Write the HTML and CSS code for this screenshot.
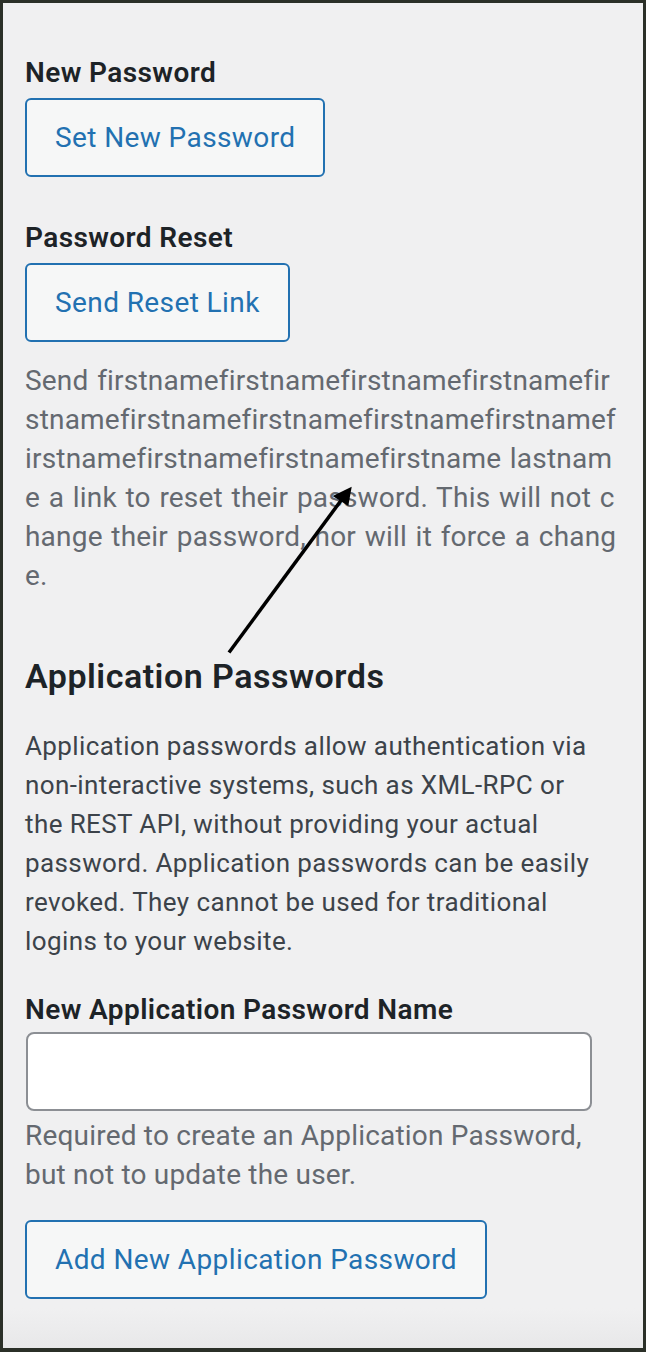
FILE: index.html
```html
<!DOCTYPE html>
<html lang="en">

<head>
    <meta charset="UTF-8">
    <meta name="viewport" content="width=device-width, initial-scale=1.0">
    <title>Profile - Account Management</title>
    <link rel="stylesheet" href="styles.css">
</head>

<body>

    <div class="screen">
        <div class="field">
            <div class="field-label">New Password</div>
            <button type="button" class="button">Set New Password</button>
        </div>

        <div class="field">
            <div class="field-label">Password Reset</div>
            <button type="button" class="button">Send Reset Link</button>
            <p class="description reset-note">Send firstnamefirstnamefirstnamefirstnamefirstnamefirstnamefirstnamefirstnamefirstnamefirstnamefirstnamefirstnamefirstname lastname a link to reset their password. This will not change their password, nor will it force a change.</p>
        </div>

        <h2>Application Passwords</h2>
        <p class="intro">Application passwords allow authentication via non-interactive systems, such as XML-RPC or the REST API, without providing your actual password. Application passwords can be easily revoked. They cannot be used for traditional logins to your website.</p>

        <div class="field">
            <label class="field-label" for="new_application_password_name">New Application Password Name</label>
            <input type="text" id="new_application_password_name" class="input">
            <p class="description">Required to create an Application Password, but not to update the user.</p>
            <button type="button" class="button add-button">Add New Application Password</button>
        </div>

        <!-- annotation arrow drawn over the page -->
        <svg class="arrow" width="646" height="1352" viewBox="0 0 646 1352">
            <line x1="229" y1="652.5" x2="341" y2="500.5" stroke="#000" stroke-width="3.5" />
            <polygon points="351.7,486.7 332.7,496 348.3,506" fill="#000" />
        </svg>
    </div>

</body>

</html>
```

FILE: styles.css
```css
body {
    margin: 0;
    padding: 0;
    background-color: #2b3028;
    font-family: Roboto, "Liberation Sans", sans-serif;
}

.screen {
    position: relative;
    box-sizing: border-box;
    width: 646px;
    height: 1352px;
    border: 3px solid #2b3028;
    border-bottom-width: 4px;
    padding: 50px 25px 0 22px;
    background: linear-gradient(to bottom, #f0f0f1 calc(100% - 40px), #e8e8e9);
    overflow: hidden;
}

.field {
    display: flex;
    flex-direction: column;
    align-items: flex-start;
}

.field + .field {
    margin-top: 41px;
}

.field-label {
    display: block;
    font-size: 28px;
    font-weight: 600;
    line-height: 39px;
    letter-spacing: 0.4px;
    color: #1d2327;
    margin-bottom: 6px;
}

.button {
    box-sizing: border-box;
    height: 79px;
    padding: 0 28px;
    border: 2px solid #2271b1;
    border-radius: 6px;
    background-color: #f6f7f7;
    color: #2271b1;
    font-family: inherit;
    font-size: 28px;
    letter-spacing: 0.4px;
    cursor: pointer;
}

.description {
    margin: 0;
    font-size: 28px;
    line-height: 39px;
    letter-spacing: 0.2px;
    color: #646970;
}

.reset-note {
    margin-top: 19px;
    word-break: break-all;
    word-spacing: 1.5px;
}

h2 {
    margin: 57px 0 0;
    font-size: 34px;
    font-weight: 600;
    line-height: 48px;
    letter-spacing: 0.5px;
    color: #1d2327;
}

.intro {
    margin: 27px 18px 29px 0;
    font-size: 26px;
    line-height: 39px;
    letter-spacing: 0.4px;
    color: #3c434a;
}

.input {
    box-sizing: border-box;
    width: 566px;
    height: 79px;
    margin: -3px 0 5px 1px;
    border: 2px solid #8c8f94;
    border-radius: 8px;
    background-color: #fff;
    font-size: 28px;
}

.add-button {
    margin-top: 26px;
}

.arrow {
    position: absolute;
    left: -3px;
    top: -3px;
    pointer-events: none;
}
```
